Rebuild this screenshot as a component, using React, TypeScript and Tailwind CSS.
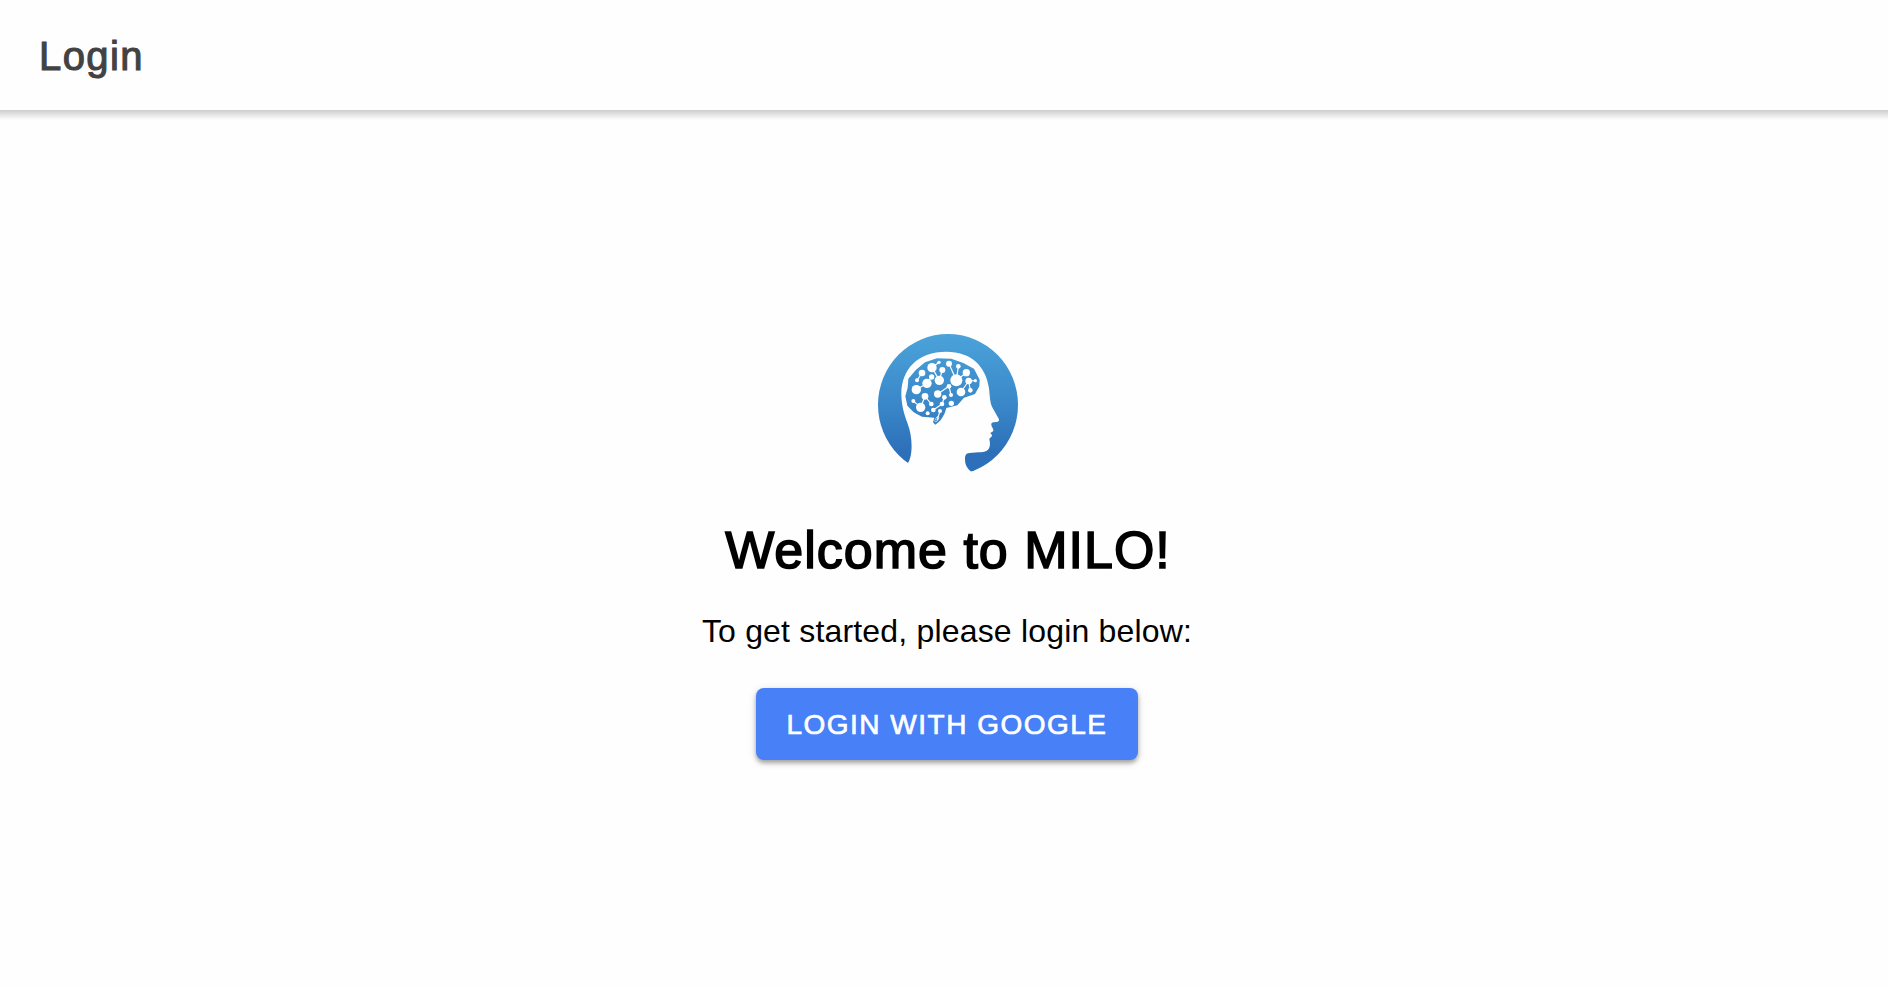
type Dot = [x: number, y: number, r: number];
type Link = [x1: number, y1: number, x2: number, y2: number];

const dots: Dot[] = [
  [162, 144, 10], [192, 128, 14], [213, 112, 5], [147, 166, 6], [191, 156, 8],
  [223, 135, 9], [214, 166, 14], [177, 175, 14], [145, 194, 14], [243, 116, 9],
  [271, 124, 7], [295, 143, 11], [265, 166, 18], [302, 168, 10], [322, 167, 5],
  [279, 201, 13], [307, 196, 7], [243, 184, 7], [209, 207, 11], [249, 210, 6],
  [229, 217, 7], [222, 237, 7], [250, 235, 8], [171, 214, 10], [190, 237, 7],
  [158, 247, 14], [136, 228, 6], [179, 265, 6], [196, 255, 7], [216, 258, 6],
];

const links: Link[] = [
  [162, 144, 147, 166], [192, 128, 213, 112], [223, 135, 214, 166], [191, 156, 177, 175],
  [177, 175, 145, 194], [192, 128, 214, 166], [243, 116, 265, 166], [271, 124, 265, 166],
  [295, 143, 265, 166], [322, 167, 302, 168], [302, 168, 279, 201], [302, 168, 307, 196],
  [209, 207, 243, 184], [243, 184, 249, 210], [229, 217, 222, 237], [222, 237, 196, 255],
  [171, 214, 158, 247], [171, 214, 190, 237], [136, 228, 158, 247], [216, 258, 207, 286],
];

function Logo() {
  return (
    <svg className="ml-[2px] h-[140px] w-[140px]" viewBox="30 27 420 420" aria-hidden="true">
      <defs>
        <linearGradient id="milo" gradientUnits="userSpaceOnUse" x1="240" y1="27" x2="240" y2="440">
          <stop offset="0" stopColor="#4ba3da" />
          <stop offset="0.5" stopColor="#3a88c9" />
          <stop offset="0.85" stopColor="#2d70b9" />
          <stop offset="1" stopColor="#2d70b9" />
        </linearGradient>
      </defs>
      <ellipse cx="240" cy="239.5" rx="210" ry="212.5" fill="url(#milo)" />
      <path
        fill="#fefefe"
        d="M120 414C135 390 134 335 119 296C106 262 100 235 100 205C101 132 150 80 235 80C310 80 354 124 363 190C366 217 366 235 374 249L391 279C395 286 393 290 386 291C375 292 369 292 370 300C371 307 377 312 376 317C375 321 369 321 367 324C369 328 372 328 372 332C371 337 364 337 364 343C367 354 367 367 360 374C351 384 330 380 304 384C294 385 291 391 291 403C291 420 298 432 311 441V460H100Z"
      />
      <path
        fill="url(#milo)"
        d="M207 100L250 101L286 114L318 131L335 164L334 184L321 207L288 218L268 241L235 249C230 270 218 290 202 299L195 292L199 278L162 275L137 262L118 242L112 214L119 188L121 161L144 134L171 112Z"
      />
      <g stroke="#fefefe" strokeWidth="3.5">
        {links.map(([x1, y1, x2, y2], i) => (
          <line key={i} x1={x1} y1={y1} x2={x2} y2={y2} />
        ))}
      </g>
      <g fill="#fefefe">
        {dots.map(([x, y, r], i) => (
          <circle key={i} cx={x} cy={y} r={r} />
        ))}
      </g>
      <path d="M200 287L207 275L213 276L210 286L203 291Z" fill="none" stroke="#fefefe" strokeWidth="2" />
    </svg>
  );
}

export default function App() {
  return (
    <div className="flex h-[986px] flex-col bg-[#fefefe] font-['Liberation_Sans',Arial,sans-serif] text-black">
      <header className="flex h-[110px] shrink-0 items-center bg-[#fefefe] px-[39px] pt-[2px]">
        <h1 className="text-[40px] leading-[48px] tracking-[1.4px] text-[#424242] [-webkit-text-stroke:1.1px_#424242]">Login</h1>
      </header>
      <div className="h-[10px] shrink-0 bg-linear-to-b from-[#cecece] via-[#e6e6e6] to-[#fefefe]" />
      <main className="flex flex-1 flex-col items-center pt-[214px] pl-[6px]">
        <Logo />
        <h2 className="mt-[45px] ml-[2px] text-[52px] leading-[62px] tracking-[1px] whitespace-nowrap [-webkit-text-stroke:1.6px_#000]">Welcome to MILO!</h2>
        <p className="mt-[31px] text-[32px] leading-[38px] tracking-[0.18px] whitespace-nowrap">To get started, please login below:</p>
        <button className="mt-[38px] flex h-[72px] w-[382px] items-center justify-center rounded-lg bg-[#4880f8] pt-[2px] text-[28px] tracking-[1.5px] whitespace-nowrap text-white shadow-[0_3px_4px_rgba(0,0,0,0.3),0_2px_10px_rgba(0,0,0,0.12)] [-webkit-text-stroke:0.7px_#fff]">
          LOGIN WITH GOOGLE
        </button>
      </main>
    </div>
  );
}
